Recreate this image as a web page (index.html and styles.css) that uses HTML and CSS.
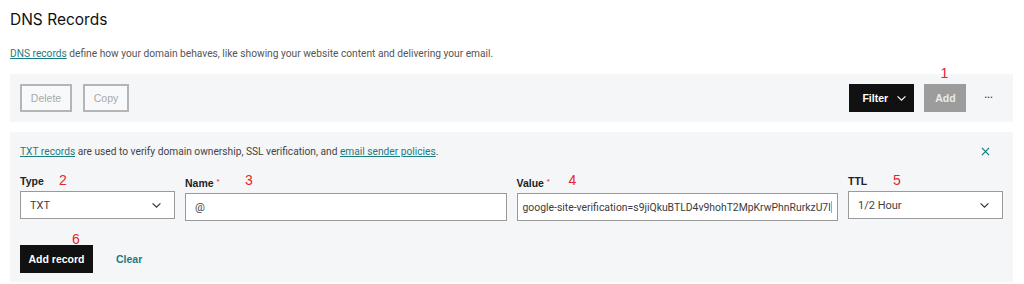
FILE: index.html
```html
<!DOCTYPE html>
<html lang="en">
<head>
  <meta charset="UTF-8" />
  <title>DNS Records</title>
  <link rel="stylesheet" href="styles.css">
</head>
<body>
  <div class="page">
    <h1 class="title">DNS Records</h1>
    <p class="intro"><a href="#">DNS records</a> define how your domain behaves, like showing your website content and delivering your email.</p>

    <div class="toolbar">
      <div class="toolbar-left">
        <button class="btn btn-outline">Delete</button>
        <button class="btn btn-outline">Copy</button>
      </div>
      <div class="toolbar-right">
        <button class="btn btn-dark btn-filter">Filter
          <svg class="chev" viewBox="0 0 12 8"><path d="M1.5 1.5l4.5 4.5 4.5-4.5" /></svg>
        </button>
        <button class="btn btn-grey">Add<span class="mark mark-1">1</span></button>
        <span class="more">&bull;&bull;&bull;</span>
      </div>
    </div>

    <div class="form-panel">
      <div class="info">
        <p><a href="#">TXT records</a> are used to verify domain ownership, SSL verification, and <a href="#">email sender policies</a>.</p>
        <svg class="close" viewBox="0 0 10 10"><path d="M1 1l8 8M9 1l-8 8" /></svg>
      </div>

      <div class="fields">
        <div class="field">
          <label>Type <span class="mark mark-2">2</span></label>
          <div class="input select">TXT
            <svg class="chev" viewBox="0 0 12 8"><path d="M1.5 1.5l4.5 4.5 4.5-4.5" /></svg>
          </div>
        </div>
        <div class="field">
          <label>Name <sup>*</sup><span class="mark mark-3">3</span></label>
          <div class="input">@</div>
        </div>
        <div class="field">
          <label>Value <sup>*</sup><span class="mark mark-4">4</span></label>
          <div class="input value">google-site-verification=s9jiQkuBTLD4v9hohT2MpKrwPhnRurkzU7l<span class="caret"></span></div>
        </div>
        <div class="field">
          <label>TTL <span class="mark mark-5">5</span></label>
          <div class="input select">1/2 Hour
            <svg class="chev" viewBox="0 0 12 8"><path d="M1.5 1.5l4.5 4.5 4.5-4.5" /></svg>
          </div>
        </div>
      </div>

      <div class="actions">
        <button class="btn btn-dark btn-add">Add record<span class="mark mark-6">6</span></button>
        <a href="#" class="clear">Clear</a>
      </div>
    </div>
  </div>
</body>
</html>
```

FILE: styles.css
```css
* {
  margin: 0; padding: 0; box-sizing: border-box;
}
body {
  font-family: Roboto, "Liberation Sans", sans-serif;
  background: #fff;
  color: #2b2b2b;
  font-size: 11px;
}
a {
  color: #1c7c80;
  text-decoration: underline;
}
.page {
  padding: 0 11px 0 10px;
}
.title {
  font-family: Inter, "Noto Sans", sans-serif;
  font-weight: 400;
  font-size: 15.5px;
  line-height: 20px;
  padding-top: 10px;
  color: #111;
}
.intro {
  color: #555;
  font-size: 10.2px;
  line-height: 14px;
  margin-top: 17px;
}
.toolbar {
  margin-top: 13px;
  height: 48px;
  background: #f5f6f8;
  display: flex;
  justify-content: space-between;
  align-items: center;
  padding: 0 10px;
}
.toolbar-left, .toolbar-right {
  display: flex;
  align-items: center;
  gap: 11px;
}
.btn {
  font-family: "Liberation Sans", Arial, sans-serif;
  font-size: 10.5px;
  height: 28px;
  padding: 0 12px;
  border: 2px solid transparent;
  background: none;
  position: relative;
  display: inline-flex;
  align-items: center;
  white-space: nowrap;
}
.btn-outline {
  border-color: #b5b5b5;
  color: #a9a9a9;
  background: #f8f9fa;
  width: 52px;
  justify-content: center;
}
.btn-outline + .btn-outline {
  width: 46px;
}
.btn-dark {
  background: #111;
  color: #fff;
  font-weight: 700;
}
.btn-filter {
  width: 65px;
  padding: 0 0 0 11px;
  gap: 8px;
  margin-right: -1px;
}
.btn-filter .chev {
  stroke: #fff;
}
.btn-grey {
  background: #9c9c9c;
  color: #eaeaea;
  font-weight: 700;
  width: 42px;
  justify-content: center;
}
.more {
  color: #333;
  font-size: 7px;
  letter-spacing: 0.5px;
  margin: 0 10px 0 7px;
}
.chev {
  width: 11px;
  height: 7px;
  fill: none;
  stroke: #333;
  stroke-width: 1.3;
}
.mark {
  position: absolute;
  font-family: "Liberation Sans", Arial, sans-serif;
  font-weight: 400;
  font-size: 14px;
  color: #e4262a;
  line-height: 14px;
}
.mark-1 { top: -20px; left: 14px; }
.mark-2 { top: -2px; left: 39px; }
.mark-3 { top: -2px; left: 60px; }
.mark-4 { top: -2px; left: 52px; }
.mark-5 { top: -2px; left: 45px; }
.mark-6 { top: -15px; left: 50px; }

.form-panel {
  margin-top: 10px;
  background: #f5f6f8;
  padding: 0 10px 10px 10px;
  height: 150px;
}
.info {
  display: flex;
  justify-content: space-between;
  align-items: center;
  height: 38px;
  padding-top: 1px;
  color: #444;
  font-size: 10.2px;
}
.close {
  width: 9px;
  height: 9px;
  fill: none;
  stroke: #1c7c80;
  stroke-width: 1.4;
  margin-right: 13px;
}
.fields {
  display: grid;
  grid-template-columns: 155px minmax(0, 1fr) minmax(0, 1fr) 155px;
  gap: 10px;
}
.field label {
  display: block;
  position: relative;
  font-family: "Liberation Sans", Arial, sans-serif;
  font-weight: 700;
  font-size: 10.5px;
  color: #222;
  line-height: 13px;
  margin-top: 5px;
  margin-bottom: 3px;
}
.field label sup {
  color: #e4262a;
  font-weight: 400;
  font-size: 8px;
  vertical-align: 3px;
}
.input {
  height: 28px;
  background: #fff;
  border: 1px solid #9a9a9a;
  display: flex;
  align-items: center;
  justify-content: space-between;
  padding: 0 10px 0 9px;
  font-size: 11px;
  color: #444;
  white-space: nowrap;
  overflow: hidden;
}
.input.select {
  padding-right: 12px;
}
.value {
  justify-content: flex-start;
  padding-left: 5px;
  color: #3c3c3c;
  font-size: 10.4px;
}
.caret {
  display: inline-block;
  flex: none;
  width: 1px;
  height: 12px;
  background: #f0a500;
}
.actions {
  display: flex;
  align-items: center;
  margin-top: 24px;
  gap: 23px;
}
.btn-add {
  width: 73px;
  justify-content: center;
}
.clear {
  font-family: "Liberation Sans", Arial, sans-serif;
  font-weight: 700;
  font-size: 10.5px;
  text-decoration: none;
  color: #1c7c80;
}
```
